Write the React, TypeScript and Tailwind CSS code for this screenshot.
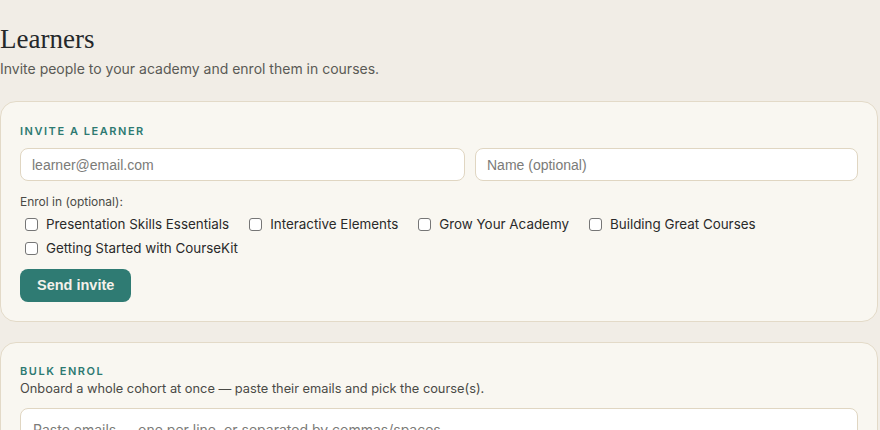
const courses = [
  "Presentation Skills Essentials",
  "Interactive Elements",
  "Grow Your Academy",
  "Building Great Courses",
  "Getting Started with CourseKit",
];

function SectionLabel({ children }: { children: React.ReactNode }) {
  return (
    <div className="text-[11px] font-semibold uppercase tracking-[0.14em] text-[#2e7a71] leading-4">
      {children}
    </div>
  );
}

export default function App() {
  return (
    <div className="min-h-screen bg-[#f1ede6] pt-[20px] font-['Inter',sans-serif] text-[#2a2a2a]">
      <h1 className="font-['Liberation_Serif',serif] text-[27px] leading-[38px] text-[#25282a]">
        Learners
      </h1>
      <p className="mt-[1px] text-[14px] leading-5 text-[#5a5a55]">
        Invite people to your academy and enrol them in courses.
      </p>

      <div className="mt-[22px] mr-[2px] rounded-2xl border border-[#e3dac8] bg-[#f9f7f1] px-[19px] pt-[21px] pb-[19px]">
        <SectionLabel>Invite a learner</SectionLabel>
        <div className="mt-[9px] grid grid-cols-[1fr_383px] gap-[10px]">
          <input
            placeholder="learner@email.com"
            className="h-[33px] rounded-lg border border-[#e0d6c2] bg-white px-[11px] font-['Liberation_Sans',sans-serif] text-[14px] placeholder:text-[#7b7b78] outline-none"
          />
          <input
            placeholder="Name (optional)"
            className="h-[33px] rounded-lg border border-[#e0d6c2] bg-white px-[11px] font-['Liberation_Sans',sans-serif] text-[14px] placeholder:text-[#7b7b78] outline-none"
          />
        </div>
        <div className="mt-[13px] text-[12px] leading-4 text-[#4a4a46]">Enrol in (optional):</div>
        <div className="mt-[4px] flex flex-wrap gap-x-[15px] gap-y-[4px]">
          {courses.map((c) => (
            <label key={c} className="flex h-5 items-center gap-[8px] pl-[5px] text-[13.4px] text-[#2a2a2a]">
              <span className="h-[13px] w-[13px] rounded-[3px] border border-[#767676] bg-white" />
              {c}
            </label>
          ))}
        </div>
        <button className="mt-[11px] h-[33px] rounded-lg bg-[#2f7b73] px-[17px] font-['Liberation_Sans',sans-serif] text-[14.5px] font-bold text-[#f4f1ea]">
          Send invite
        </button>
      </div>

      <div className="mt-[20px] mr-[2px] rounded-2xl border border-[#e3dac8] bg-[#f9f7f1] px-[19px] pt-[20px] pb-[19px]">
        <SectionLabel>Bulk enrol</SectionLabel>
        <p className="mt-[1px] text-[12.8px] leading-[18px] text-[#4a4a46]">
          Onboard a whole cohort at once — paste their emails and pick the course(s).
        </p>
        <textarea
          rows={4}
          placeholder="Paste emails — one per line, or separated by commas/spaces"
          className="mt-[10px] w-full resize-none rounded-lg border border-[#e0d6c2] bg-white px-3 py-[10px] text-[14px] placeholder:text-[#7b7b78] outline-none"
        />
      </div>
    </div>
  );
}
